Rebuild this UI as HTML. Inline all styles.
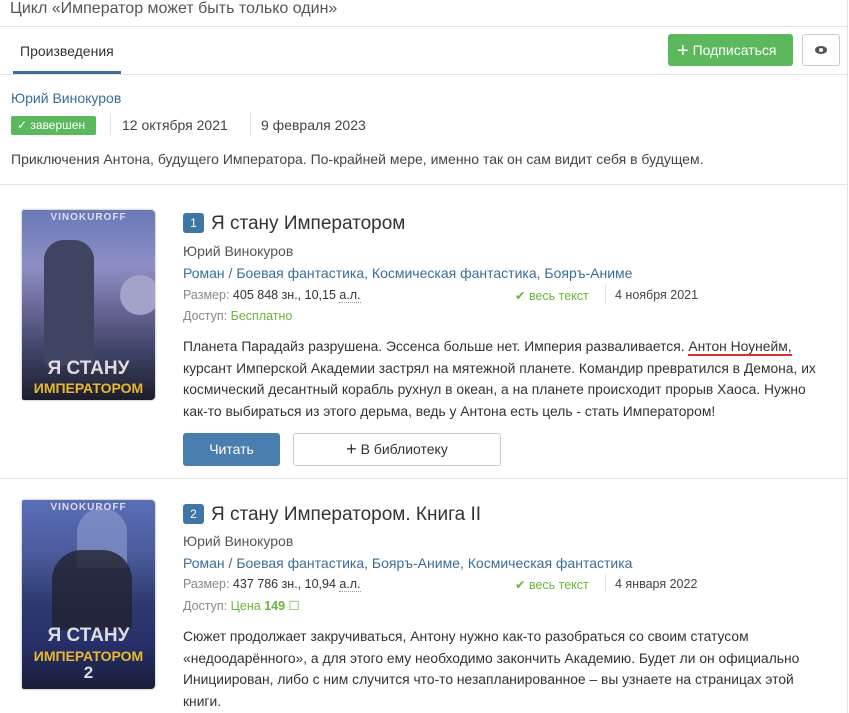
<!DOCTYPE html>
<html><head><meta charset="utf-8"><style>
*{margin:0;padding:0;box-sizing:border-box}
body{width:849px;height:713px;overflow:hidden;background:#fff;font-family:"Liberation Sans",sans-serif;color:#333;position:relative;font-size:14px}
.a{position:absolute;white-space:nowrap}
.hl{position:absolute;left:0;width:847px;height:1px;background:#e3e3e3}
.link{color:#3a6d99}
.g{color:#888}
.gr{color:#6cb33f}
.cover{position:absolute;left:22px;width:133px;border-radius:2px 4px 4px 2px;overflow:hidden;box-shadow:0 0 2px rgba(0,0,0,.4)}
.cover .au{position:absolute;top:2px;left:0;right:0;text-align:center;color:#dde;font-weight:bold;font-size:10px;letter-spacing:1px}
.cover .t1{position:absolute;left:0;right:0;text-align:center;color:#ddd;font-weight:bold;font-size:19px}
.cover .t2{position:absolute;left:0;right:0;text-align:center;color:#e8b830;font-weight:bold;font-size:14px}
.num{position:absolute;width:21px;height:20px;background:#3e76a6;color:#fff;border-radius:3px;font-size:12px;text-align:center;line-height:20px}
.title{font-size:19px;color:#333}
.sm{font-size:12.5px}
.desc{position:absolute;left:183px;font-size:13.85px;line-height:21.6px;color:#333}
</style></head><body>
<div style="position:absolute;left:847px;top:0;width:1px;height:713px;background:#e3e3e3"></div>
<div class="a" style="left:10px;top:0px;font-size:16px;color:#555">Цикл «Император может быть только один»</div>
<div class="hl" style="top:26px"></div>
<div class="a" style="left:20px;top:43px;font-size:14px;color:#333">Произведения</div>
<div style="position:absolute;left:13px;top:71px;width:108px;height:3px;background:#3e6e96"></div>
<div class="hl" style="top:74px"></div>
<div style="position:absolute;left:668px;top:34px;width:125px;height:32px;background:#5cb85c;border-radius:3px;color:#fff;font-size:14px;line-height:32px;padding-left:9px"><span style="font-size:20px;vertical-align:-2px">+</span> Подписаться</div>
<div style="position:absolute;left:802px;top:34px;width:38px;height:32px;border:1px solid #ccc;border-radius:3px;background:#fff">
<svg width="36" height="30" viewBox="0 0 36 30"><ellipse cx="18" cy="15" rx="6" ry="4" fill="#555"/><circle cx="18" cy="15" r="2" fill="#fff"/></svg></div>
<div class="a link" style="left:11px;top:90px;font-size:14px">Юрий Винокуров</div>
<div style="position:absolute;left:11px;top:116px;width:85px;height:19px;background:#5cb85c;border-radius:2px;color:#fff;font-size:12px;line-height:19px;padding-left:6px">✓ завершен</div>
<div style="position:absolute;left:110px;top:113px;width:1px;height:22px;background:#e3e3e3"></div>
<div class="a" style="left:122px;top:117px;font-size:14px;color:#444">12 октября 2021</div>
<div style="position:absolute;left:250px;top:113px;width:1px;height:22px;background:#e3e3e3"></div>
<div class="a" style="left:261px;top:117px;font-size:14px;color:#444">9 февраля 2023</div>
<div class="a" style="left:11px;top:151px;font-size:14px;color:#444">Приключения Антона, будущего Императора. По-крайней мере, именно так он сам видит себя в будущем.</div>
<div class="hl" style="top:184px"></div>

<div class="cover" style="top:210px;height:190px;background:linear-gradient(180deg,#6a79b8 0%,#8d8fc4 30%,#6b6a9a 50%,#3d4266 75%,#1c1d2a 100%)">
<div style="position:absolute;left:22px;top:30px;width:50px;height:125px;background:#3f4460;border-radius:20px 20px 5px 5px"></div>
<div style="position:absolute;left:98px;top:65px;width:40px;height:40px;border-radius:50%;background:#a3a3c9"></div>
<div class="au">VINOKUROFF</div>
<div class="t1" style="top:148px">Я СТАНУ</div>
<div class="t2" style="top:170px">ИМПЕРАТОРОМ</div></div>

<div class="num" style="left:183px;top:213px">1</div>
<div class="a title" style="left:211px;top:213px">Я стану Императором</div>
<div class="a" style="left:183px;top:243px;color:#555">Юрий Винокуров</div>
<div class="a link" style="left:183px;top:265px">Роман / Боевая фантастика, Космическая фантастика, Бояръ-Аниме</div>
<div class="a sm" style="left:183px;top:288px"><span class="g">Размер:</span> 405 848 зн., 10,15 <span style="border-bottom:1px dotted #999">а.л.</span></div>
<div class="a sm gr" style="left:515px;top:288px">✔ весь текст</div>
<div style="position:absolute;left:605px;top:285px;width:1px;height:18px;background:#e3e3e3"></div>
<div class="a sm" style="left:615px;top:288px;color:#444">4 ноября 2021</div>
<div class="a sm" style="left:183px;top:309px"><span class="g">Доступ:</span> <span class="gr">Бесплатно</span></div>
<div class="desc" style="top:336px">Планета Парадайз разрушена. Эссенса больше нет. Империя разваливается. <span style="border-bottom:2px solid #d9302c">Антон Ноунейм,</span><br>курсант Имперской Академии застрял на мятежной планете. Командир превратился в Демона, их<br>космический десантный корабль рухнул в океан, а на планете происходит прорыв Хаоса. Нужно<br>как-то выбираться из этого дерьма, ведь у Антона есть цель - стать Императором!</div>
<div style="position:absolute;left:183px;top:433px;width:97px;height:33px;background:#4a7eae;border-radius:3px;color:#fff;text-align:center;line-height:33px">Читать</div>
<div style="position:absolute;left:293px;top:433px;width:208px;height:33px;border:1px solid #ccc;border-radius:3px;text-align:center;line-height:31px;color:#333"><span style="font-size:18px;vertical-align:-1px">+</span> В библиотеку</div>
<div class="hl" style="top:478px"></div>

<div class="cover" style="top:500px;height:189px;background:linear-gradient(180deg,#5a6eb8 0%,#4a5a9a 30%,#2d3a6e 55%,#27306a 75%,#1a1e3a 100%)">
<div style="position:absolute;left:55px;top:8px;width:50px;height:60px;border-radius:25px 25px 0 0;background:#8fa0d0;opacity:.6"></div>
<div style="position:absolute;left:30px;top:50px;width:80px;height:80px;background:#202230;border-radius:30px 30px 5px 5px;opacity:.8"></div>
<div class="au" style="color:#dde">VINOKUROFF</div>
<div class="t1" style="top:125px">Я СТАНУ</div>
<div class="t2" style="top:148px">ИМПЕРАТОРОМ</div>
<div class="t1" style="top:163px;font-size:17px">2</div></div>

<div class="num" style="left:183px;top:504px">2</div>
<div class="a title" style="left:211px;top:504px">Я стану Императором. Книга II</div>
<div class="a" style="left:183px;top:533px;color:#555">Юрий Винокуров</div>
<div class="a link" style="left:183px;top:555px">Роман / Боевая фантастика, Бояръ-Аниме, Космическая фантастика</div>
<div class="a sm" style="left:183px;top:577px"><span class="g">Размер:</span> 437 786 зн., 10,94 <span style="border-bottom:1px dotted #999">а.л.</span></div>
<div class="a sm gr" style="left:515px;top:577px">✔ весь текст</div>
<div style="position:absolute;left:605px;top:574px;width:1px;height:18px;background:#e3e3e3"></div>
<div class="a sm" style="left:615px;top:577px;color:#444">4 января 2022</div>
<div class="a sm" style="left:183px;top:598px"><span class="g">Доступ:</span> <span class="gr">Цена <b>149</b> ☐</span></div>
<div class="desc" style="top:626px">Сюжет продолжает закручиваться, Антону нужно как-то разобраться со своим статусом<br>«недоодарённого», а для этого ему необходимо закончить Академию. Будет ли он официально<br>Инициирован, либо с ним случится что-то незапланированное – вы узнаете на страницах этой<br>книги.</div>
</body></html>
